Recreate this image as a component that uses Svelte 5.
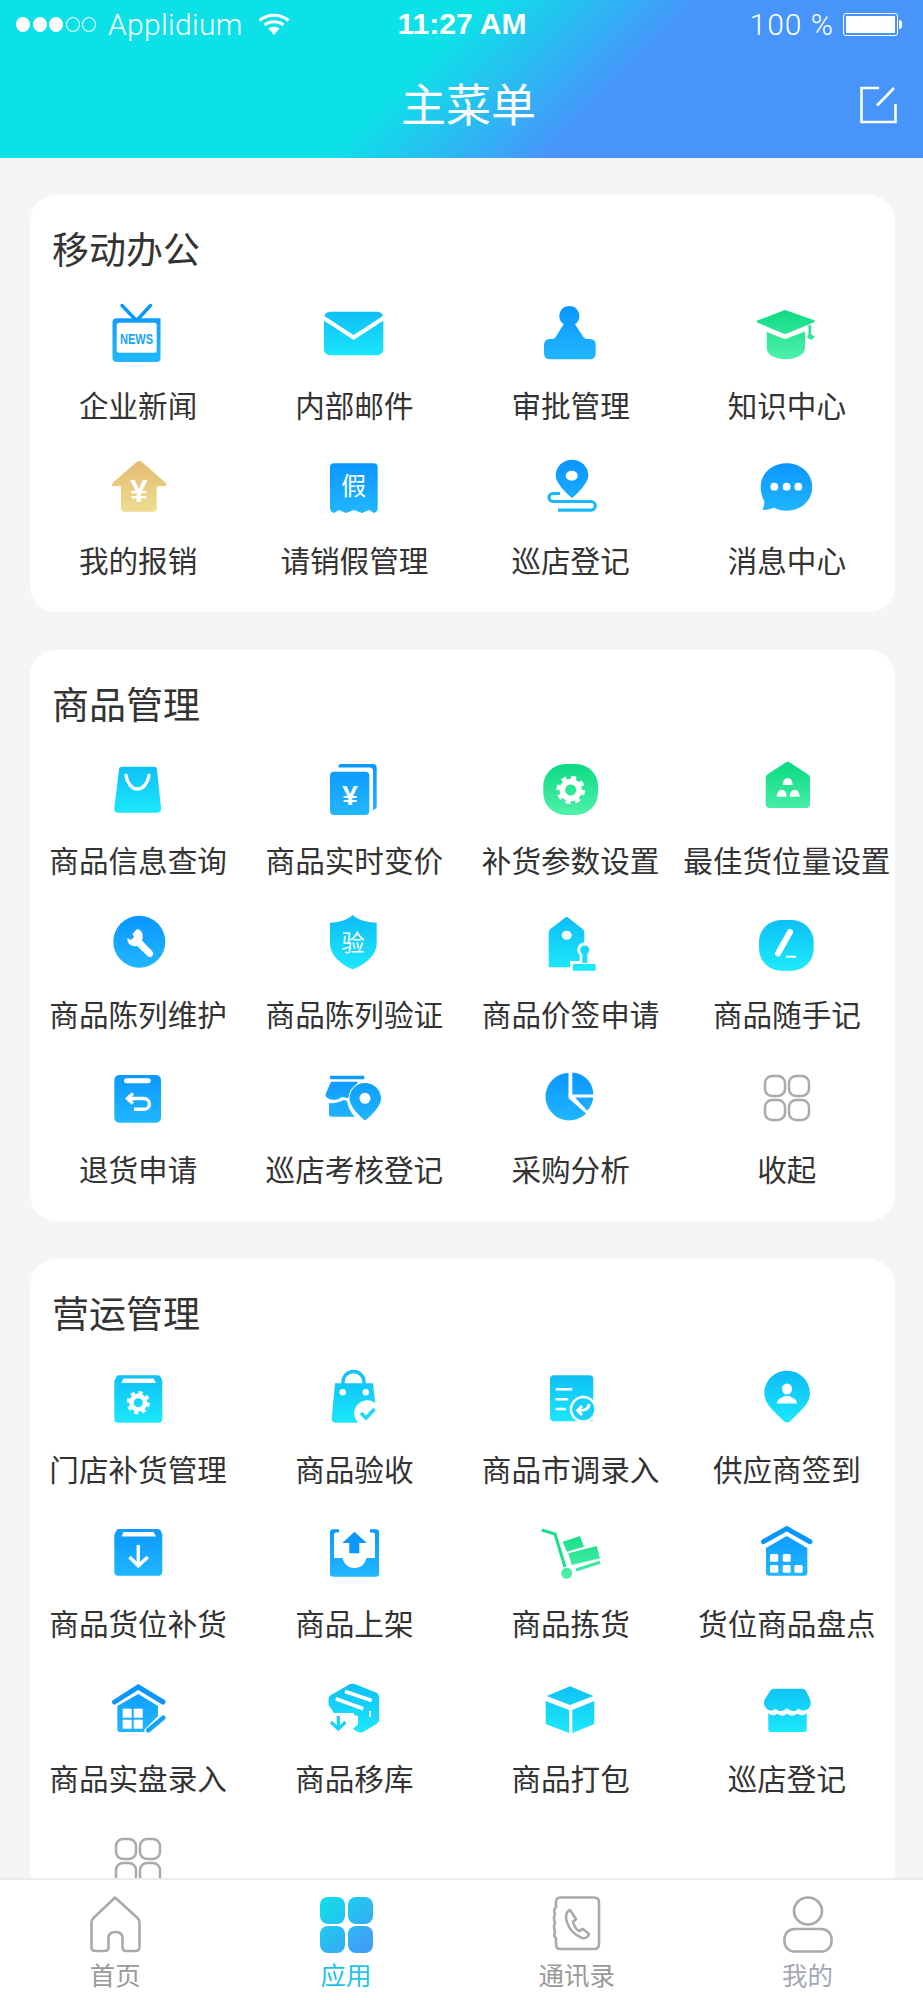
<script>
	// every icon is drawn in a 80x64 box, filled with one of the shared gradients below
	const blue = 'fill="url(#g-blue)"';
	const cyan = 'fill="url(#g-cyan)"';
	const green = 'fill="url(#g-green)"';
	const white = 'fill="#fff"';

	function gear(cx, cy, r) {
		return `<circle cx="${cx}" cy="${cy}" r="${r * 0.62}" fill="none" stroke="#fff" stroke-width="${r * 0.42}"/>
			<circle cx="${cx}" cy="${cy}" r="${r * 0.9}" fill="none" stroke="#fff" stroke-width="${r * 0.32}" stroke-dasharray="${r * 0.36} ${r * 0.347}"/>`;
	}

	const grid = `<g fill="none" stroke="#aaa" stroke-width="2.5">
		<rect x="18" y="11" width="20" height="20" rx="7"/><rect x="42" y="11" width="20" height="20" rx="7"/>
		<rect x="18" y="35" width="20" height="20" rx="7"/><rect x="42" y="35" width="20" height="20" rx="7"/></g>`;

	const icons = {
		news: `<path ${blue} d="M18.5 17.3H62.5V57Q62.5 61 58.5 61H18.5Q14.5 61 14.5 57V21.3Q14.5 17.3 18.5 17.3Z"/>
			<path d="M24 4.5L37 18M52.5 4.5L40 18" stroke="#0a96ff" stroke-width="3.4" stroke-linecap="round"/>
			<rect x="18.7" y="21.7" width="40" height="30" rx="2.5" ${white}/>
			<text x="22" y="43" font-size="14" font-weight="700" textLength="33" lengthAdjust="spacingAndGlyphs" fill="#12a4ff">NEWS</text>`,
		mail: `<rect x="10" y="10.7" width="59.3" height="43.6" rx="6" ${cyan}/>
			<path d="M8 16L39.7 36.5L71 16" fill="none" stroke="#fff" stroke-width="4"/>`,
		approve: `<path ${blue} d="M38.3 5A10 10 0 0 1 44 23.2L52 35.5Q53.5 38 56 38H58.7Q64.7 38 64.7 44V52.3Q64.7 58.3 58.7 58.3H19Q13 58.3 13 52.3V44Q13 38 19 38H21Q23.5 38 25 35.5L32.6 23.2A10 10 0 0 1 38.3 5Z"/>`,
		cap: `<g ${green}><path d="M38 9L67.3 19.2Q68.3 20.5 67 21.2L40 32.5Q38 33.3 36 32.5L10.2 21.5Q9.2 20.5 10.2 19.5Z"/>
			<path d="M19.7 31L36 37.5Q38 38.3 40 37.5L58 30.5V47C58 54 48 58.3 38.5 58.3C29 58.3 19.7 54 19.7 47Z"/>
			<path d="M61.5 24H64V33L68 36L64.5 39L60 36.5L61.5 33Z"/></g>`,
		expense: `<path fill="url(#g-gold)" d="M38.8 6Q41.3 3.8 43.8 6L67.5 26.5Q70 30 66.5 30.3H58.7V52Q58.7 55.7 55 55.7H26.7Q23 55.7 23 52V30.3H15.5Q12.5 30 15 26.5Z"/>
			<text x="41" y="45.5" font-size="32" font-weight="700" text-anchor="middle" ${white}>¥</text>`,
		leave: `<path ${blue} d="M20 7.3H59.7Q63.7 7.3 63.7 11.3V52Q63.7 56 60 57L55 54L48 57L40 54L32 57L25 54L20 57Q16 56 16 52V11.3Q16 7.3 20 7.3Z"/>
			<text x="39.7" y="39" font-size="25" text-anchor="middle" ${white}>假</text>`,
		patrol: `<path ${blue} fill-rule="evenodd" d="M41 3.7C50 3.7 57.3 10.6 57.3 19.5C57.3 27 47 37 41 42C35 37 24.7 27 24.7 19.5C24.7 10.6 32 3.7 41 3.7Z"/>
			<ellipse cx="40.7" cy="19.7" rx="6" ry="5" ${white}/>
			<path d="M29 37.5H22A4 4 0 0 0 22 45.5H60A4.3 4.3 0 0 1 60 54.1H27" fill="none" stroke="#1fb5ff" stroke-width="3.2"/>`,
		message: `<path ${blue} d="M39.5 7.3C54 7.3 65.3 17.5 65.3 31C65.3 44.5 54 54.7 39.5 54.7C34 54.7 30 53.5 27 51.5C24 53 20 54 16.5 54Q15.5 54 16 52.5C17 49.5 17.5 47.5 17.3 45C15 41 13.7 36 13.7 31C13.7 17.5 25 7.3 39.5 7.3Z"/>
			<g ${white}><circle cx="27.3" cy="30.7" r="3.9"/><circle cx="39.7" cy="30.7" r="3.9"/><circle cx="51.3" cy="30.7" r="3.9"/></g>`,
		bag: `<path ${cyan} d="M24 10.7H56Q58.7 10.7 59 13.5L63 52Q63.3 56.7 59 56.7H20Q16 56.7 16.3 52L21 13.5Q21.3 10.7 24 10.7Z"/>
			<path d="M28 19.5C29 27 34 33 39.5 33C45 33 50 27 51 19.5" fill="none" stroke="#fff" stroke-width="3.4" stroke-linecap="round"/>`,
		price: `<path ${blue} d="M27 8H58.7Q62.7 8 62.7 12V50Q62.7 53 59 54V15Q59 11.5 55.5 11.5H24.3Q24.3 8 27 8Z"/>
			<rect x="16" y="15.7" width="39.3" height="43.3" rx="4" ${blue}/>
			<text x="36" y="49" font-size="28" font-weight="700" text-anchor="middle" ${white}>¥</text>`,
		params: `<rect x="12.3" y="8" width="54.7" height="51" rx="22" ${green}/>${gear(39.7, 34, 13.5)}`,
		slot: `<path ${green} d="M38.7 6.5Q40.7 5 42.7 6.5L60.5 18Q63 19.5 63 22V48Q63 52 59 52H22.7Q18.7 52 18.7 48V22Q18.7 19.5 21 18Z"/>
			<g ${white}><path d="M35.7 29C36 24 38 22.3 40.7 22.3C43.4 22.3 45.4 24 45.7 29Z"/>
			<path transform="translate(-6 11.7)" d="M35.7 29C36 24 38 22.3 40.7 22.3C43.4 22.3 45.4 24 45.7 29Z"/>
			<path transform="translate(7 11.7)" d="M35.7 29C36 24 38 22.3 40.7 22.3C43.4 22.3 45.4 24 45.7 29Z"/></g>`,
		wrench: `<circle cx="41.3" cy="31.7" r="26" ${blue}/>
			<path ${white} d="M39 19L34.5 24L36 27L33 30L29.5 28C28.5 33 33.5 37.5 39 36L49.5 46C51 47.5 53 47.5 54.3 46C55.5 44.5 55.5 42.5 54 41L44 30.5C46 25 44 19.5 39 19Z"/>`,
		shield: `<path ${cyan} d="M38.7 5C43 9.5 52 12.5 62.7 12.7V33C62.7 46 50 55 38.7 59.3C28 55 16 46 16 33V12.7C26 12.5 34.5 9.5 38.7 5Z"/>
			<text x="39" y="40.5" font-size="23" text-anchor="middle" ${white}>验</text>`,
		tag: `<path ${cyan} d="M33.7 8Q35.7 6 37.7 8L51 18.5Q53.3 20 53.3 22.5V57.3H17.7V22.5Q17.7 20 20 18.5Z"/>
			<ellipse cx="35.7" cy="25.3" rx="5" ry="4.5" ${white}/>
			<path d="M53.7 34.5a5.2 5.2 0 0 1 3 9.5V53H65V61H41V53H50.7V44a5.2 5.2 0 0 1 3-9.5Z" fill="#fff" stroke="#fff" stroke-width="4"/>
			<g ${cyan}><circle cx="53.7" cy="40" r="4.6"/><rect x="51.3" y="42" width="5" height="11"/><rect x="41.7" y="54" width="23" height="6.7" rx="1.5"/></g>`,
		note: `<rect x="12" y="10" width="54.7" height="50.7" rx="22" ${cyan}/>
			<path d="M43 22L31 43.5" stroke="#fff" stroke-width="6" stroke-linecap="round"/>
			<path d="M39 46.7H49" stroke="#fff" stroke-width="2"/>`,
		refund: `<rect x="16.3" y="10" width="46.7" height="47.7" rx="5" ${blue}/>
			<rect x="26" y="13.3" width="26.7" height="5" rx="2.5" ${white}/>
			<path d="M35 28.5L29.5 33.5L35 38.5M29.5 33.5H46A5.4 5.4 0 0 1 46 44.3H36" fill="none" stroke="#fff" stroke-width="3.4"/>`,
		audit: `<g ${blue}><rect x="16" y="10.7" width="34.3" height="3.6" rx="1"/>
			<path d="M17 16.7H44L41 23C37 27 36 29 34.5 33C31 33 29 31 27 32.5C24 35 18 36 13.5 33Q10.5 31 12 28Z"/>
			<path d="M15 38C20 39 25 37 30 35L33 36C34 41 36 47 41 51.7H18Q15 51.7 15 48.7Z"/>
			<path d="M51 18C60 18 67 25 67 33.7C67 41 57 51 51 55.5C45 51 35.5 41 35.5 33.7C35.5 25 42 18 51 18Z" stroke="#fff" stroke-width="2" paint-order="stroke"/></g>
			<circle cx="51" cy="33.3" r="5.5" ${white}/>`,
		pie: `<g ${blue}><path d="M37.5 8V33.2L55 48.4A23.7 23.7 0 1 1 37.5 8Z"/>
			<path d="M41.3 7.5A22 22 0 0 1 62.3 29.5H41.3Z"/><path d="M44 32.5H62.3A24 24 0 0 1 56.3 45.7Z"/></g>`,
		grid,
		boxgear: `<path ${cyan} d="M21 10.3H59.5Q62 10.3 63 12.5L64.3 16V53.7Q64.3 57.7 60.3 57.7H20.3Q16.3 57.7 16.3 53.7V16L18 12.5Q19 10.3 21 10.3Z"/>
			<path ${white} d="M25.5 13.5H55.5L58 18H23.5Z"/>${gear(40.3, 37.7, 11)}`,
		receive: `<path d="M29 22V17A10.5 10.5 0 0 1 50 17V22" fill="none" stroke="#10c4f6" stroke-width="3.4"/>
			<path ${cyan} d="M21 18.3H59L62.7 52Q63 57.7 58 57.7H22Q17.4 57.7 17.7 53Z"/>
			<g ${white}><circle cx="28.7" cy="27.3" r="3.2"/><circle cx="51.7" cy="27.3" r="3.2"/><circle cx="53.3" cy="48.3" r="13"/></g>
			<path d="M47 48L52 53L60.5 44" fill="none" stroke="#1ad8f8" stroke-width="3.4"/>`,
		survey: `<rect x="19" y="10.3" width="43.3" height="46" rx="4" ${cyan}/>
			<path d="M24.7 24.3H41.3M24.7 34.3H37.3M24.7 44H34.7" stroke="#fff" stroke-width="2.4"/>
			<circle cx="52.3" cy="44.3" r="13.5" ${white}/><circle cx="52.3" cy="44.3" r="11" fill="#18d0f8"/>
			<path d="M58 39C58 44 54 46 47 45.5M51 41L46.5 45.5L51 50" fill="none" stroke="#fff" stroke-width="2.8"/>`,
		signin: `<path ${cyan} d="M40 5.7C53 5.7 63 16 63 28.5C63 39 52 47 44 55.5Q40 59.5 36 55.5C28 47 17.3 39 17.3 28.5C17.3 16 27 5.7 40 5.7Z"/>
			<g ${white}><ellipse cx="40" cy="24" rx="5" ry="5.5"/><path d="M30 38.5C30 33 36 33 37 31H43C44 33 50 33 50 38.5Z"/></g>`,
		boxdown: `<path ${blue} d="M21 10H59.5Q62 10 63 12.2L64.3 15.7V52.7Q64.3 56.7 60.3 56.7H20.3Q16.3 56.7 16.3 52.7V15.7L18 12.2Q19 10 21 10Z"/>
			<path ${white} d="M25.5 13H55.5L58 17.5H23.5Z"/>
			<path d="M40.3 26V46.5M31.5 38L40.3 46.8L49.8 38" fill="none" stroke="#fff" stroke-width="3.4"/>`,
		shelve: `<path ${blue} d="M19 10.3H25V13.5H22Q20 13.5 20 15.5V39H28.5C30 45 34 49 40.5 49C47 49 51 45 52.5 39H61V15.5Q61 13.5 59 13.5H56V10.3H62Q65 10.3 65 13.3V54.7Q65 57.7 62 57.7H19Q16 57.7 16 54.7V13.3Q16 10.3 19 10.3Z"/>
			<path fill="#0a96ff" d="M40.5 12.7L52.7 24H45.3V34.3H35.3V24H28.3Z"/>`,
		pick: `<g ${green}><path d="M31.7 22.7L49 17L53 27.7L35.7 32.7Z"/><path d="M37.3 34.3L65.7 27L69 39.3L40.7 46Z"/><circle cx="35.7" cy="54.3" r="5.5"/></g>
			<path d="M10.7 11L24 15L34 48" fill="none" stroke="#1bdf8d" stroke-width="3"/>
			<path d="M45 51L69 43.3" stroke="#3de8a0" stroke-width="3"/>`,
		stock: `<path d="M16.5 22.7L39.7 9.5L63 22.7" fill="none" stroke="#0a96ff" stroke-width="5" stroke-linecap="round"/>
			<path ${blue} d="M39.7 17L60.3 29V53.7Q60.3 56.7 57.3 56.7H22Q19 56.7 19 53.7V29Z"/>
			<g ${white}><rect x="23" y="35" width="8.3" height="7.7" rx="1.5"/><rect x="35.7" y="35" width="8" height="7.7" rx="1.5"/>
			<rect x="23" y="46" width="8.3" height="7.7" rx="1.5"/><rect x="35.7" y="46" width="8" height="7.7" rx="1.5"/><rect x="47.3" y="46" width="8.3" height="7.7" rx="1.5"/></g>`,
		count: `<path d="M16.5 28L40.3 13L65 28" fill="none" stroke="#0a96ff" stroke-width="5" stroke-linecap="round"/>
			<path ${blue} d="M40.3 20L60 32V42L46 56L47 58H22Q19.3 58 19.3 55V32Z"/>
			<g ${white}><rect x="24.7" y="34.7" width="9" height="9"/><rect x="35.7" y="34.7" width="9" height="9"/>
			<rect x="24.7" y="45.7" width="9" height="9"/><rect x="35.7" y="45.7" width="9" height="9"/></g>
			<path d="M50.3 56.3L65.3 43.7" stroke="#0fa4ff" stroke-width="4.6" stroke-linecap="round"/>`,
		move: `<path ${cyan} d="M36 10Q39 9.4 42 10.4L62 18.5Q65 20 65 23V46Q65 48.5 62.5 50L50 57.5Q47 59 44 58L39 55L44 50V42L33 39H20L14.5 31V25Q14.5 22.5 17 21Z"/>
			<path d="M31 17.5L57.7 26.5M21.7 24.7L49.3 34.7" stroke="#fff" stroke-width="3.6"/>
			<path d="M56 37V43" stroke="#fff" stroke-width="2"/>
			<path d="M18 39H40V49L30 59H18Z" ${white}/>
			<path d="M24.3 42V54.7M17 48L24.3 55L31.5 48" fill="none" stroke="#18d4f8" stroke-width="3.2"/>`,
		pack: `<g ${cyan} stroke-linejoin="round"><path d="M39 12.3L62.3 22L39 31L15.7 22Z"/><path d="M14.7 27L38 36V59L14.7 50Z"/><path d="M41.3 36L63.3 27V50L41.3 59Z"/></g>`,
		store: `<g ${cyan}><path d="M27 14.7H55Q58 14.7 59 17L63 25Q65 30 62 34C60 37 54 37.5 51.5 34.5C49 38 43 38 40 34C37 38 31 38 28.5 34.5C26 37.5 21 37 19 34C16 30 17 27 18 25L23 17Q24.5 14.7 27 14.7Z"/>
			<path d="M21.3 39C24 42 28 42 30.5 39.5C33.5 42.5 37 42.5 40 39.5C43 42.5 47 42.5 50 39.5C53 42 57 42 59.7 39V55.5Q59.7 58 57 58H24Q21.3 58 21.3 55.5Z"/></g>`
	};

	const sections = [
		{
			title: '移动办公',
			items: [
				['企业新闻', 'news'], ['内部邮件', 'mail'], ['审批管理', 'approve'], ['知识中心', 'cap'],
				['我的报销', 'expense'], ['请销假管理', 'leave'], ['巡店登记', 'patrol'], ['消息中心', 'message']
			]
		},
		{
			title: '商品管理',
			items: [
				['商品信息查询', 'bag'], ['商品实时变价', 'price'], ['补货参数设置', 'params'], ['最佳货位量设置', 'slot'],
				['商品陈列维护', 'wrench'], ['商品陈列验证', 'shield'], ['商品价签申请', 'tag'], ['商品随手记', 'note'],
				['退货申请', 'refund'], ['巡店考核登记', 'audit'], ['采购分析', 'pie'], ['收起', 'grid']
			]
		},
		{
			title: '营运管理',
			items: [
				['门店补货管理', 'boxgear'], ['商品验收', 'receive'], ['商品市调录入', 'survey'], ['供应商签到', 'signin'],
				['商品货位补货', 'boxdown'], ['商品上架', 'shelve'], ['商品拣货', 'pick'], ['货位商品盘点', 'stock'],
				['商品实盘录入', 'count'], ['商品移库', 'move'], ['商品打包', 'pack'], ['巡店登记', 'store'],
				['', 'grid']
			]
		}
	];
</script>

<svg class="defs" width="0" height="0" aria-hidden="true">
	<defs>
		<linearGradient id="g-blue" gradientUnits="userSpaceOnUse" x1="0" y1="6" x2="0" y2="60">
			<stop offset="0" stop-color="#0a96ff" /><stop offset="1" stop-color="#22b8ff" />
		</linearGradient>
		<linearGradient id="g-cyan" gradientUnits="userSpaceOnUse" x1="0" y1="8" x2="0" y2="58">
			<stop offset="0" stop-color="#0dbef6" /><stop offset="1" stop-color="#1ce8fb" />
		</linearGradient>
		<linearGradient id="g-green" gradientUnits="userSpaceOnUse" x1="0" y1="8" x2="0" y2="58">
			<stop offset="0" stop-color="#0bda82" /><stop offset="1" stop-color="#4ff1aa" />
		</linearGradient>
		<linearGradient id="g-gold" gradientUnits="userSpaceOnUse" x1="0" y1="5" x2="0" y2="56">
			<stop offset="0" stop-color="#e2bb70" /><stop offset="1" stop-color="#eedd90" />
		</linearGradient>
		<linearGradient id="g-tab" gradientUnits="userSpaceOnUse" x1="6" y1="3" x2="59" y2="59">
			<stop offset="0" stop-color="#0de2e8" /><stop offset="1" stop-color="#4795fb" />
		</linearGradient>
	</defs>
</svg>

<div class="page">
	<header class="head">
		<div class="status">
			<div class="carrier">
				<span class="dots">
					<i class="on"></i><i class="on"></i><i class="on"></i><i></i><i></i>
				</span>
				<span>Applidium</span>
				<svg class="wifi" width="32" height="22" viewBox="0 0 32 22">
					<path d="M1.5 7.5C9.5 .5 22.5 .5 30.5 7.5M6.5 12C11.5 7.5 20.5 7.5 25.5 12" fill="none" stroke="#fff" stroke-width="3" />
					<path d="M10.5 15.5C13.5 13 18.5 13 21.5 15.5L16 22Z" fill="#fff" />
				</svg>
			</div>
			<div class="time">11:27 AM</div>
			<div class="power">
				<span class="percent">100 %</span>
				<span class="battery"><span class="level"></span></span>
			</div>
		</div>
		<div class="nav">
			<h1>主菜单</h1>
			<svg class="edit" width="40" height="40" viewBox="0 0 40 40">
				<path d="M21 3H3.5V37H37.5V19M36 3L19 20.5" fill="none" stroke="#fff" stroke-width="2.6" />
			</svg>
		</div>
	</header>

	<main class="content">
		{#each sections as section}
			<section class="card">
				<h2>{section.title}</h2>
				<div class="grid">
					{#each section.items as [label, icon]}
						<div class="item">
							<svg class="icon" width="80" height="64" viewBox="0 0 80 64">{@html icons[icon]}</svg>
							{#if label}<span>{label}</span>{/if}
						</div>
					{/each}
				</div>
			</section>
		{/each}
	</main>

	<nav class="tabs">
		<div class="tab">
			<svg width="64" height="60" viewBox="0 0 64 60">
				<path d="M32 3.5L10.5 24Q8.5 26 8.5 29V53Q8.5 57 12.5 57H21.5Q25.5 57 25.5 53V44Q25.5 38 32.5 38Q39.5 38 39.5 44V53Q39.5 57 43.5 57H52.5Q56.5 57 56.5 53V29Q56.5 26 54.5 24Z" fill="none" stroke="#aaa" stroke-width="2.6" stroke-linejoin="round" />
			</svg>
			<span>首页</span>
		</div>
		<div class="tab active">
			<svg width="64" height="60" viewBox="0 0 64 60" fill="url(#g-tab)">
				<rect x="6" y="3" width="25" height="27" rx="8" /><rect x="34" y="3" width="25" height="27" rx="8" />
				<rect x="6" y="32" width="25" height="27" rx="8" /><rect x="34" y="32" width="25" height="27" rx="8" />
			</svg>
			<span>应用</span>
		</div>
		<div class="tab">
			<svg width="64" height="60" viewBox="0 0 64 60" fill="none" stroke="#aaa" stroke-width="2.6">
				<path d="M15 3.5H49Q54 3.5 54 8.5V50Q54 55 49 55H15Q11 55 11 50V44Q8 42 10 38Q8 33 10 29Q8 24 10 20Q8 16 11 13V8.5Q11 3.5 15 3.5Z" />
				<path d="M25 16C21 18 20 22 22 28C24 35 30 41 37 44C40 45 43 43 44 40L38 35L34 37C31 35 29 32 28 28L31 25Z" stroke-linejoin="round" />
			</svg>
			<span>通讯录</span>
		</div>
		<div class="tab me">
			<svg width="64" height="60" viewBox="0 0 64 60" fill="none" stroke="#aaa" stroke-width="2.6">
				<ellipse cx="32" cy="17" rx="14" ry="13.5" />
				<rect x="8.5" y="35" width="47" height="22.5" rx="10" />
			</svg>
			<span>我的</span>
		</div>
	</nav>
</div>

<style>
	:global(body) {
		margin: 0;
		background: #f5f5f5;
	}

	.defs {
		position: absolute;
	}

	.page {
		display: flex;
		flex-direction: column;
		height: 2000px;
		overflow: hidden;
		font-family: 'Noto Sans CJK SC', 'Noto Sans', sans-serif;
		color: #333;
	}

	.head {
		flex: none;
		height: 158px;
		color: #fff;
		background: linear-gradient(135deg, #0de1e8 45%, #4795fb 65%);
	}

	.status {
		display: grid;
		grid-template-columns: 1fr auto 1fr;
		align-items: center;
		height: 48px;
		padding: 0 20px 0 16px;
		font-family: Roboto, 'Liberation Sans', sans-serif;
		font-weight: 300;
		font-size: 30px;
		letter-spacing: 0.3px;
	}

	.carrier {
		display: flex;
		align-items: center;
		gap: 12px;
	}

	.dots {
		display: flex;
		gap: 2.5px;
	}

	.dots i {
		box-sizing: border-box;
		width: 14px;
		height: 15px;
		border: 1px solid #fff;
		border-radius: 50%;
	}

	.dots i.on {
		background: #fff;
	}

	.wifi {
		margin-left: 3px;
	}

	.time {
		margin-left: 5px;
		font-family: 'Liberation Sans', sans-serif;
		font-weight: 700;
		font-size: 30px;
		letter-spacing: 0;
	}

	.power {
		display: flex;
		align-items: center;
		justify-content: flex-end;
		gap: 9px;
	}

	.percent {
		letter-spacing: 1px;
	}

	.battery {
		position: relative;
		box-sizing: border-box;
		width: 55px;
		height: 23px;
		padding: 2px;
		border: 1px solid #fff;
		border-radius: 3px;
		margin-right: 5px;
	}

	.battery::after {
		content: '';
		position: absolute;
		right: -5px;
		top: 6px;
		width: 3px;
		height: 9px;
		background: #fff;
		border-radius: 0 3px 3px 0;
	}

	.level {
		display: block;
		height: 100%;
		background: #fff;
	}

	.nav {
		position: relative;
		display: flex;
		align-items: center;
		justify-content: center;
		height: 110px;
		padding-left: 14px;
	}

	h1 {
		margin: 0;
		font-size: 45px;
		font-weight: 400;
		line-height: 56px;
	}

	.edit {
		position: absolute;
		right: 25px;
		top: 37px;
	}

	.content {
		flex: 1;
		min-height: 0;
		overflow: hidden;
		padding: 37px 28px 0 30px;
		background: #f5f5f5;
	}

	.card {
		padding-bottom: 2px;
		margin-bottom: 37.5px;
		background: #fff;
		border-radius: 26px;
	}

	h2 {
		margin: 0;
		padding: 27px 0 27px 22px;
		font-size: 37px;
		font-weight: 400;
		line-height: 52px;
	}

	.grid {
		display: grid;
		grid-template-columns: repeat(4, 1fr);
		grid-auto-rows: 154.5px;
	}

	.item {
		display: flex;
		flex-direction: column;
		align-items: center;
		gap: 20px;
	}

	.item span {
		font-size: 29.6px;
		line-height: 40px;
		white-space: nowrap;
	}

	.icon :global(text) {
		font-family: 'Liberation Sans', 'Noto Sans CJK SC', sans-serif;
	}

	.tabs {
		flex: none;
		display: grid;
		grid-template-columns: repeat(4, 1fr);
		box-sizing: border-box;
		height: 122px;
		padding-top: 14px;
		background: #fff;
		border-top: 2px solid #ececec;
		font-size: 25.5px;
		color: #999;
	}

	.tab {
		display: flex;
		flex-direction: column;
		align-items: center;
		line-height: 40px;
	}

	.tab svg {
		flex: none;
	}

	.tab.active {
		color: #1cc5e6;
	}

	.tab.me {
		color: #a4a8b6;
	}
</style>
